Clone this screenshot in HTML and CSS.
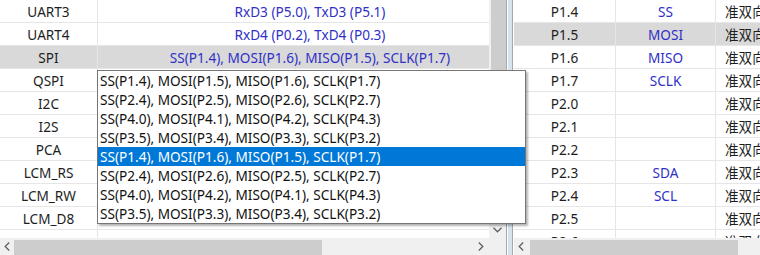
FILE: index.html
```html
<!DOCTYPE html>
<html>
<head>
<meta charset="utf-8">
<link rel="stylesheet" href="styles.css">
</head>
<body>
<div class="app">
  <div class="pane pane-left">
    <div class="view">
      <div class="grid">
        <div class="row"><div class="c1">UART3</div><div class="c2">RxD3 (P5.0), TxD3 (P5.1)</div></div>
        <div class="row"><div class="c1">UART4</div><div class="c2">RxD4 (P0.2), TxD4 (P0.3)</div></div>
        <div class="row sel"><div class="c1">SPI</div><div class="c2">SS(P1.4), MOSI(P1.6), MISO(P1.5), SCLK(P1.7)</div></div>
        <div class="row"><div class="c1">QSPI</div><div class="c2"></div></div>
        <div class="row"><div class="c1">I2C</div><div class="c2"></div></div>
        <div class="row"><div class="c1">I2S</div><div class="c2"></div></div>
        <div class="row"><div class="c1">PCA</div><div class="c2"></div></div>
        <div class="row"><div class="c1">LCM_RS</div><div class="c2"></div></div>
        <div class="row"><div class="c1">LCM_RW</div><div class="c2"></div></div>
        <div class="row"><div class="c1">LCM_D8</div><div class="c2"></div></div>
        <div class="row"><div class="c1"></div><div class="c2"></div></div>
      </div>
      <div class="vscroll">
        <div class="vthumb"></div>
        <div class="vtrack"></div>
        <div class="vbtn"><svg width="9" height="6" viewBox="0 0 9 6"><polyline points="0.5,0.8 4.5,4.8 8.5,0.8" fill="none" stroke="#606060" stroke-width="1.3"/></svg></div>
      </div>
    </div>
    <div class="hscroll">
      <div class="hbtn"><svg width="6" height="9" viewBox="0 0 6 9"><polyline points="5.2,0.5 1.2,4.5 5.2,8.5" fill="none" stroke="#606060" stroke-width="1.3"/></svg></div>
      <div class="hthumb thumb-left"></div>
      <div class="htrack"></div>
      <div class="hbtn hbtn-end"><svg width="6" height="9" viewBox="0 0 6 9"><polyline points="0.8,0.5 4.8,4.5 0.8,8.5" fill="none" stroke="#606060" stroke-width="1.3"/></svg></div>
      <div class="corner"></div>
    </div>
  </div>
  <div class="splitter"></div>
  <div class="pane pane-right">
    <div class="view">
      <div class="grid grid-right">
        <div class="row"><div class="p1">P1.4</div><div class="p2">SS</div><div class="p3">准双向口</div></div>
        <div class="row sel"><div class="p1">P1.5</div><div class="p2">MOSI</div><div class="p3">准双向口</div></div>
        <div class="row"><div class="p1">P1.6</div><div class="p2">MISO</div><div class="p3">准双向口</div></div>
        <div class="row"><div class="p1">P1.7</div><div class="p2">SCLK</div><div class="p3">准双向口</div></div>
        <div class="row"><div class="p1">P2.0</div><div class="p2"></div><div class="p3">准双向口</div></div>
        <div class="row"><div class="p1">P2.1</div><div class="p2"></div><div class="p3">准双向口</div></div>
        <div class="row"><div class="p1">P2.2</div><div class="p2"></div><div class="p3">准双向口</div></div>
        <div class="row"><div class="p1">P2.3</div><div class="p2">SDA</div><div class="p3">准双向口</div></div>
        <div class="row"><div class="p1">P2.4</div><div class="p2">SCL</div><div class="p3">准双向口</div></div>
        <div class="row"><div class="p1">P2.5</div><div class="p2"></div><div class="p3">准双向口</div></div>
        <div class="row"><div class="p1">P2.6</div><div class="p2"></div><div class="p3">准双向口</div></div>
      </div>
    </div>
    <div class="hscroll">
      <div class="hbtn"><svg width="6" height="9" viewBox="0 0 6 9"><polyline points="5.2,0.5 1.2,4.5 5.2,8.5" fill="none" stroke="#606060" stroke-width="1.3"/></svg></div>
      <div class="hthumb thumb-right"></div>
      <div class="htrack"></div>
    </div>
  </div>
  <div class="dropdown">
    <div class="item">SS(P1.4), MOSI(P1.5), MISO(P1.6), SCLK(P1.7)</div>
    <div class="item">SS(P2.4), MOSI(P2.5), MISO(P2.6), SCLK(P2.7)</div>
    <div class="item">SS(P4.0), MOSI(P4.1), MISO(P4.2), SCLK(P4.3)</div>
    <div class="item">SS(P3.5), MOSI(P3.4), MISO(P3.3), SCLK(P3.2)</div>
    <div class="item hl">SS(P1.4), MOSI(P1.6), MISO(P1.5), SCLK(P1.7)</div>
    <div class="item">SS(P2.4), MOSI(P2.6), MISO(P2.5), SCLK(P2.7)</div>
    <div class="item">SS(P4.0), MOSI(P4.2), MISO(P4.1), SCLK(P4.3)</div>
    <div class="item">SS(P3.5), MOSI(P3.3), MISO(P3.4), SCLK(P3.2)</div>
  </div>
</div>
</body>
</html>
```

FILE: styles.css
```css
* { box-sizing: border-box; margin: 0; padding: 0; }
html, body { width: 760px; height: 255px; overflow: hidden; background: #fff; }
body {
  font-family: "Noto Sans", "Noto Sans CJK SC", sans-serif;
  font-size: 13.6px;
  color: #1e1e1e;
}
.app { display: flex; height: 255px; position: relative; }
.pane { display: flex; flex-direction: column; height: 255px; }
.pane-left { width: 506px; flex: none; }
.pane-right { flex: 1; min-width: 0; overflow: hidden; }
.view { display: flex; height: 238px; overflow: hidden; }
.grid { width: 489px; flex: none; overflow: hidden; }
.grid-right { width: auto; flex: 1; }
.row {
  display: flex;
  height: 23px;
  border-bottom: 1px solid #e6e6e6;
  white-space: nowrap;
}
.row.sel { background: #d9d9d9; }
.row > div { line-height: 20px; padding-top: 2px; }
.c1 { width: 98px; flex: none; text-align: center; border-right: 1px solid #e6e6e6; }
.c2 { width: 424px; flex: none; text-align: center; color: #3030c8; }
.p1 { width: 102px; flex: none; text-align: center; border-right: 1px solid #e6e6e6; }
.p2 { width: 100px; flex: none; text-align: center; border-right: 1px solid #e6e6e6; color: #3030c8; }
.p3 { flex: none; padding-left: 9px; }

.vscroll {
  width: 17px; flex: none;
  background: #f0f0f0;
  display: flex; flex-direction: column;
  padding-left: 2px;
}
.vthumb { height: 180px; background: #cdcdcd; }
.vtrack { flex: 1; }
.vbtn { height: 16px; display: flex; align-items: center; justify-content: center; margin-left: -2px; }

.hscroll {
  height: 17px;
  background: #f0f0f0;
  display: flex;
  align-items: stretch;
}
.hbtn { width: 14px; flex: none; display: flex; align-items: center; justify-content: center; }
.hbtn-end { width: 16px; }
.hthumb { margin-top: 2px; background: #cdcdcd; flex: none; }
.thumb-left { width: 308px; }
.thumb-right { width: 208px; margin-left: 2px; }
.htrack { flex: 1; }
.corner { width: 17px; flex: none; background: #f0f0f0; }

.splitter {
  width: 8px; flex: none;
  background: linear-gradient(to right, #a8a8a8 0 1px, #ffffff 1px 2px, #d6e3ef 2px 6px, #a8a8a8 6px 7px, #ffffff 7px 8px);
}

.dropdown {
  position: absolute;
  left: 97px; top: 70px;
  width: 429px; height: 154px;
  background: #fff;
  border: 1px solid #767676;
  box-shadow: 2px 2px 2px rgba(0, 0, 0, 0.3);
}
.item {
  height: 19px;
  line-height: 18px;
  padding-top: 1px;
  padding-left: 2px;
  white-space: nowrap;
  color: #111;
}
.item.hl { background: #0078d7; color: #fff; }
```
